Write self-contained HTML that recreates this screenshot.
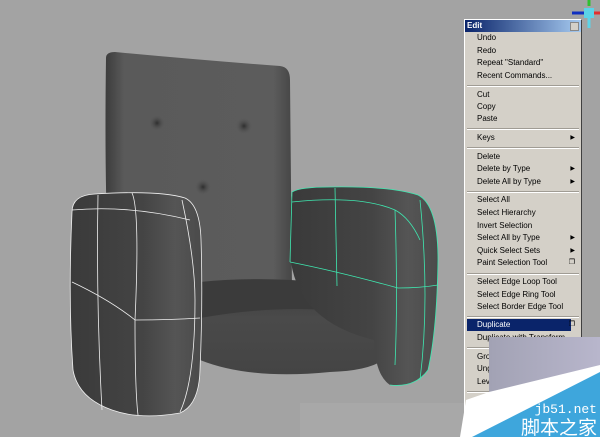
<!DOCTYPE html>
<html><head><meta charset="utf-8"><style>
body{margin:0;width:600px;height:437px;overflow:hidden;background:#a3a3a3;position:relative;font-family:Tahoma,"Liberation Sans",sans-serif}
.menu{position:absolute;left:464px;top:19px;width:118px;height:400px;background:#d4d0c8;border:1px solid #fff;border-right-color:#404040;box-sizing:border-box}
.tb{height:12px;background:linear-gradient(90deg,#0a246a,#a6caf0);color:#fff;font-size:8px;font-weight:bold;line-height:12px;padding-left:2px;position:relative}
.tb span{position:absolute;right:2px;top:2px;width:7px;height:7px;background:#d4d0c8;border:1px solid #888;}
.it{position:absolute;left:12px;font-size:8px;color:#000;white-space:nowrap;line-height:12px}
.sep{position:absolute;left:2px;right:2px;height:0;border-top:1px solid #a09c94;border-bottom:1px solid #fff}
.ar{position:absolute;right:6px;font-size:6px}
</style></head><body>
<svg width="600" height="437" style="position:absolute;left:0;top:0">
<defs>
<linearGradient id="bk" x1="0" x2="1"><stop offset="0" stop-color="#3c3c3c"/><stop offset="0.1" stop-color="#5a5a5a"/><stop offset="0.9" stop-color="#5c5c5c"/><stop offset="1" stop-color="#464646"/></linearGradient>
<linearGradient id="arm" x1="0" x2="1"><stop offset="0" stop-color="#3a3a3a"/><stop offset="0.55" stop-color="#444"/><stop offset="0.8" stop-color="#555"/><stop offset="1" stop-color="#4a4a4a"/></linearGradient>
<linearGradient id="seat" x1="0" y1="0" x2="0" y2="1"><stop offset="0" stop-color="#3a3a3a"/><stop offset="0.4" stop-color="#4a4a4a"/><stop offset="1" stop-color="#444"/></linearGradient>
<radialGradient id="dp"><stop offset="0" stop-color="#2e2e2e"/><stop offset="1" stop-color="#555" stop-opacity="0"/></radialGradient>
</defs>
<rect x="300" y="403" width="165" height="34" fill="#a8a8a8"/>
<path d="M106,58 Q106,52 115,52 Q200,60 280,66 Q290,67 290,80 L292,290 L110,290 Q104,200 106,58Z" fill="url(#bk)"/>
<path d="M200,283 Q300,275 385,290 L392,345 Q390,370 330,372 Q250,380 200,360Z" fill="url(#seat)"/>
<path d="M200,282 Q290,273 385,292 L390,318 Q300,300 200,318Z" fill="#3b3b3b"/>
<path d="M292,192 Q300,187 330,187 Q390,186 418,195 Q438,205 438,260 Q437,330 428,370 Q415,388 390,385 Q375,375 374,340 Q300,322 291,262 Q289,210 292,192Z" fill="url(#arm)"/>
<path d="M72,212 Q72,195 95,194 Q160,190 185,198 Q200,205 201,240 Q203,300 200,370 Q199,405 180,413 Q140,420 112,410 Q78,398 73,370 Q68,300 72,212Z" fill="url(#arm)"/>
<g fill="none" stroke="#f0f0f0" stroke-width="0.8">
<path d="M72,212 Q72,195 95,194 Q160,190 185,198 Q200,205 201,240 Q203,300 200,370 Q199,405 180,413 Q140,420 112,410 Q78,398 73,370 Q68,300 72,212Z"/>
<path d="M98,195 Q96,300 102,410"/><path d="M132,193 Q140,210 135,320 Q135,390 138,415"/>
<path d="M72,210 Q130,205 190,220"/><path d="M72,282 Q110,300 135,320 Q170,320 200,318"/>
<path d="M182,200 Q195,260 195,300 Q195,380 180,412"/>
</g>
<g fill="none" stroke="#3fe8b0" stroke-width="0.8">
<path d="M292,192 Q300,187 330,187 Q390,186 418,195 Q438,205 438,260 Q437,330 428,370 Q415,388 390,385"/>
<path d="M292,192 L290,262"/>
<path d="M335,188 L337,286"/>
<path d="M292,202 Q360,195 395,210 Q410,218 420,240"/>
<path d="M290,262 Q340,272 398,288 Q420,288 438,285"/>
<path d="M395,210 Q398,300 395,365"/><path d="M420,200 Q430,300 420,380"/>
</g>
<circle cx="157" cy="123" r="8" fill="url(#dp)"/><circle cx="244" cy="126" r="8" fill="url(#dp)"/><circle cx="203" cy="187" r="8" fill="url(#dp)"/>
<rect x="584" y="8" width="10" height="10" fill="#5cd3e8"/><path d="M572,13 L584,13" stroke="#1030c0" stroke-width="3"/><path d="M594,13 L600,13" stroke="#e03030" stroke-width="3"/><path d="M589,18 L589,28" stroke="#5cd3e8" stroke-width="3"/><path d="M589,0 L589,6" stroke="#30c030" stroke-width="3"/>
</svg>
<div class="menu">
<div class="tb">Edit<span></span></div>
<div class="it" style="top:12px">Undo</div><div class="it" style="top:25px">Redo</div><div class="it" style="top:37px">Repeat "Standard"</div><div class="it" style="top:50px">Recent Commands...</div>
<div class="sep" style="top:65px"></div>
<div class="it" style="top:69px">Cut</div><div class="it" style="top:81px">Copy</div><div class="it" style="top:93px">Paste</div>
<div class="sep" style="top:108px"></div>
<div class="it" style="top:112px">Keys</div><div class="ar" style="top:114px">▶</div>
<div class="sep" style="top:127px"></div>
<div class="it" style="top:131px">Delete</div><div class="it" style="top:143px">Delete by Type</div><div class="ar" style="top:145px">▶</div><div class="it" style="top:156px">Delete All by Type</div><div class="ar" style="top:158px">▶</div>
<div class="sep" style="top:171px"></div>
<div class="it" style="top:174px">Select All</div><div class="it" style="top:187px">Select Hierarchy</div><div class="it" style="top:200px">Invert Selection</div><div class="it" style="top:212px">Select All by Type</div><div class="ar" style="top:214px">▶</div><div class="it" style="top:225px">Quick Select Sets</div><div class="ar" style="top:227px">▶</div><div class="it" style="top:237px">Paint Selection Tool</div><div class="ar" style="top:238px;font-size:7px">❐</div>
<div class="sep" style="top:253px"></div>
<div class="it" style="top:256px">Select Edge Loop Tool</div><div class="it" style="top:269px">Select Edge Ring Tool</div><div class="it" style="top:281px">Select Border Edge Tool</div>
<div class="sep" style="top:296px"></div>
<div style="position:absolute;left:2px;width:104px;top:299px;height:12px;background:#0a246a"></div>
<div class="it" style="top:299px;color:#fff">Duplicate</div><div class="ar" style="top:300px;font-size:7px">❐</div>
<div class="it" style="top:312px">Duplicate with Transform</div>
<div class="sep" style="top:327px"></div>
<div class="it" style="top:331px">Group</div><div class="it" style="top:343px">Ungroup</div><div class="it" style="top:356px">Level</div>
<div class="sep" style="top:371px"></div>
</div>
<div style="position:absolute;left:489px;top:337px;width:111px;height:55px;background:linear-gradient(90deg,#a2a2b4,#b8b6cc)"></div>
<svg width="600" height="437" style="position:absolute;left:0;top:0">
<polygon points="466,400 489,392 600,365 600,437 460,437" fill="#fff"/>
<polygon points="472,437 600,372 600,437" fill="#3ea6dc"/>
<text x="597" y="413" fill="#fff" font-size="13" text-anchor="end" font-family="Liberation Mono,monospace">jb51.net</text>
<text x="597" y="434" fill="#fff" font-size="19" text-anchor="end" font-family="Liberation Sans,Noto Sans CJK SC,sans-serif">脚本之家</text>
</svg>
</body></html>
